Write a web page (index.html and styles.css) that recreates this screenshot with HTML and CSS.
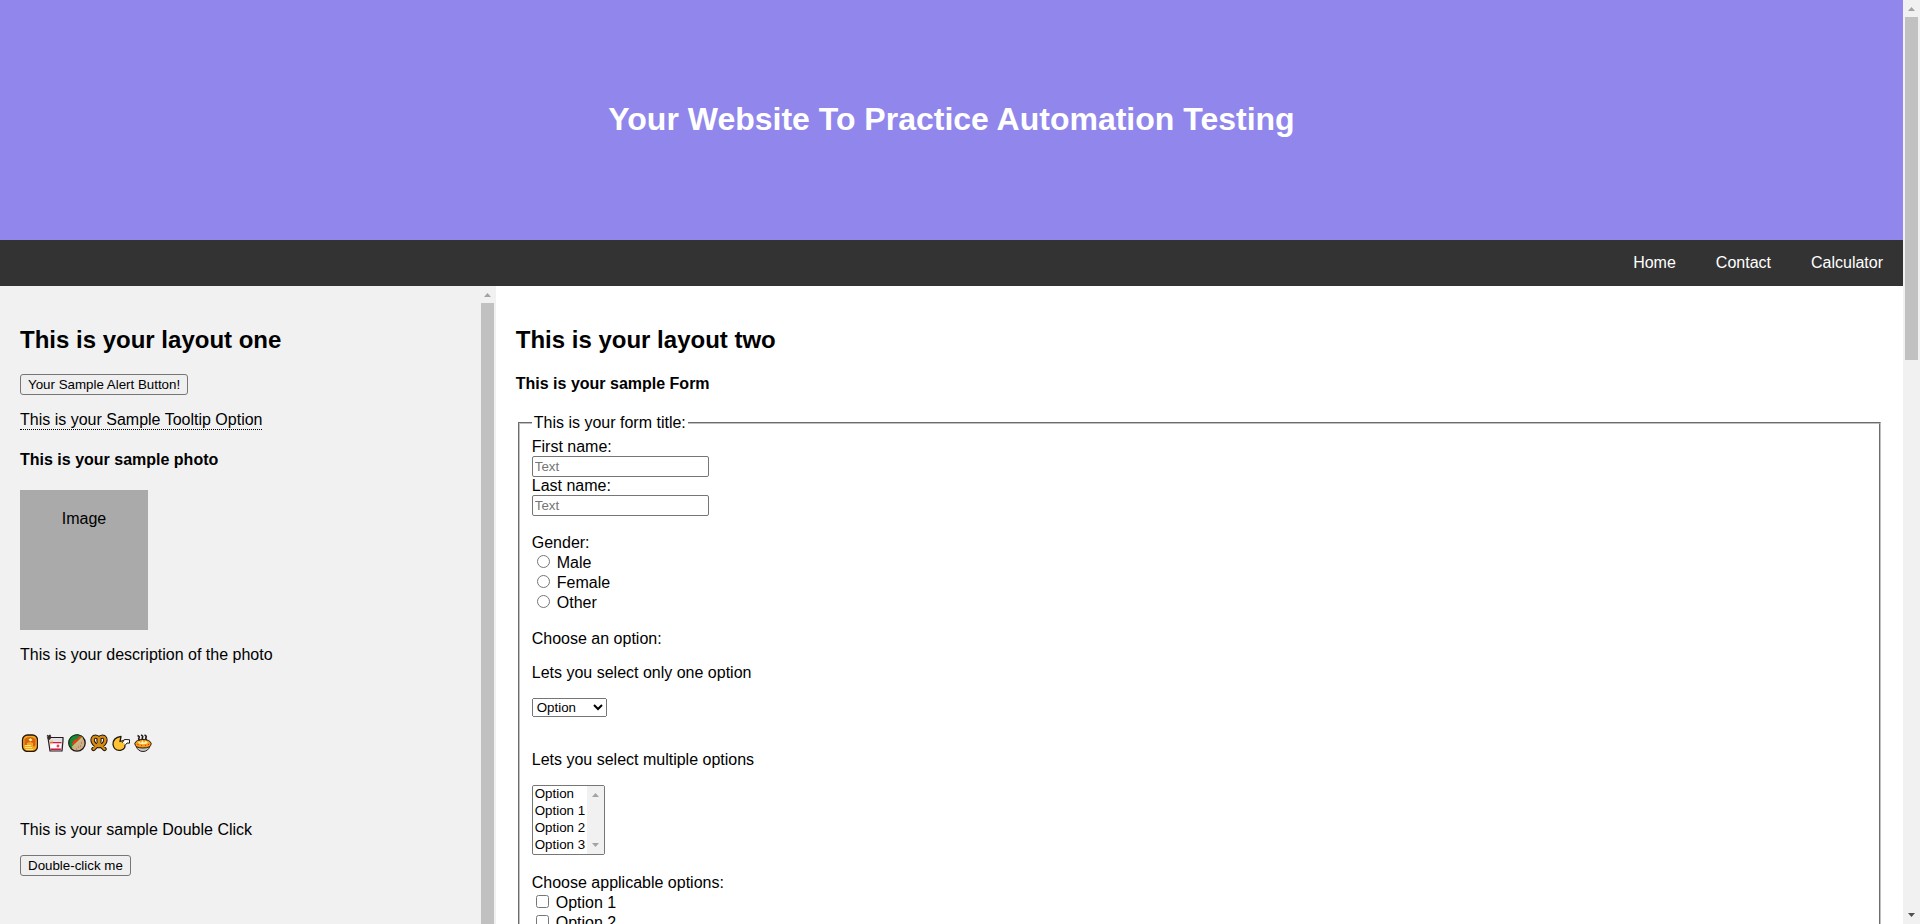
FILE: index.html
```html
<!DOCTYPE html>
<html lang="en">
<head>
<meta charset="utf-8">
<title>Your Website To Practice Automation Testing</title>
<link rel="stylesheet" href="styles.css">
</head>
<body>
<div class="window">
  <div class="page">
    <header class="header"><h1>Your Website To Practice Automation Testing</h1></header>
    <nav class="navbar">
      <a href="#home">Home</a>
      <a href="#contact">Contact</a>
      <a href="#calculator">Calculator</a>
    </nav>
    <div class="row">
      <aside class="side">
        <div class="side-content">
          <h2>This is your layout one</h2>
          <button type="button">Your Sample Alert Button!</button>
          <div class="tooltip">This is your Sample Tooltip Option</div>
          <h4>This is your sample photo</h4>
          <div class="photo">Image</div>
          <p>This is your description of the photo</p>
          <div class="foods">
            <svg class="food food-first" viewBox="0 0 18 18" aria-hidden="true">
              <rect x="2.500" y="1" width="15" height="16.500" rx="5" fill="#f5a81c" stroke="#26160a" stroke-width="1.300"/>
              <path d="M4.500 5q5.500-4 11 0v6q-1 3-2.500 1V9l-3-1-3 1v2q-1.500 1-2.500 0z" fill="#d56311"/>
              <path d="M5 11.500h6M5 13.500h7M6 15.500h7" stroke="#ffe27a" stroke-width="1.200"/>
              <path d="M8.500 5.500 10.500 4.300 12.500 6 10.300 7.500z" fill="#fff2a2"/>
            </svg>
            <svg class="food" viewBox="0 0 18 18" aria-hidden="true">
              <path d="M2 3.500h15v3L16 17H4L2.500 7z" fill="#e4e0e2" stroke="#221a20" stroke-width="1.200"/>
              <path d="M4 8h11.500l-.2 1.500H4.200z" fill="#d7193f"/>
              <path d="M4.300 9.500h11l-.4 5H4.600z" fill="#fff"/>
              <path d="M4.500 14.500h10.600l-.3 1.500H4.700z" fill="#d7193f"/>
              <path d="M12 10.500v3M10.500 12h3" stroke="#d7193f" stroke-width="1.200"/>
              <path d="M1 1.500l4 2M4 .8v4M1.500 3.300l2.700 2" stroke="#3c2b25" stroke-width="1.700"/>
              <path d="M5 6.500v4M6.500 6.500v2" stroke="#f0b95b"/>
            </svg>
            <svg class="food" viewBox="0 0 18 18" aria-hidden="true">
              <circle cx="9" cy="9" r="8.200" fill="#d1ad8c" stroke="#1c1712" stroke-width="1.300"/>
              <path d="M1.200 11Q0 4 6 1.300q4-1.500 8 1L3.500 14.500z" fill="#168a32" stroke="#10401c"/>
              <path d="M4 10l2-4 3-1 3-3.200L14 3 5 12z" fill="#e83b22"/>
              <path d="M4 13.500 14.500 3.500" stroke="#b4d86a" stroke-width="1.300"/>
              <path d="M10 13h1M13 9h1M8 15h1M12 12h1" stroke="#8d6d52"/>
            </svg>
            <svg class="food" viewBox="0 0 18 18" aria-hidden="true">
              <g fill="none" stroke-linecap="round" stroke-linejoin="round">
                <path d="M3.500 15 7 11.500Q10.500 7.500 9 4.500 6.500 1.800 4 3 1.800 4.500 3 8q2 4 6 4t6-4q1.200-3.500-1-5-2.500-1.200-5 1.500-1.500 3 2 7L14.500 15" stroke="#24170a" stroke-width="4.400"/>
                <path d="M3.500 15 7 11.500Q10.500 7.500 9 4.500 6.500 1.800 4 3 1.800 4.500 3 8q2 4 6 4t6-4q1.200-3.500-1-5-2.500-1.200-5 1.500-1.500 3 2 7L14.500 15" stroke="#d68b12" stroke-width="2.400"/>
              </g>
            </svg>
            <svg class="food" viewBox="0 0 18 18" aria-hidden="true">
              <path d="M9 2.500 8 7.500l5-1.500-1 3Q15 15 8.500 16.300 2 17 1 10.500.800 3.500 9 2.500z" fill="#ffc233" stroke="#1f1a12" stroke-width="1.300" stroke-linejoin="round"/>
              <path d="m10 9 2.500-3.500 5 .2v3.500l-2.500-.2-2 2.500z" fill="#fff" stroke="#1f1a12" stroke-linejoin="round"/>
              <path d="M9.500 8.500 8.300 11.500h4l.7-2z" fill="#ffc233"/>
            </svg>
            <svg class="food" viewBox="0 0 18 18" aria-hidden="true">
              <path d="M2 12q2 5.500 7 5.500t7-5.500z" fill="#c6c6c6" stroke="#282420"/>
              <path d="M.8 9.500Q2 5.500 9 5.500t8.200 4q0 4.500-8.200 4.500T.8 9.500z" fill="#f49b13" stroke="#241c12"/>
              <path d="M4 9l1-2 2 2 1.500-3L10 9l1.700-2.500L14 9q-5 2.500-10 0z" fill="#fff2ad"/>
              <path d="M3.500 10.500h1M7 11.500h1M11 11.500h1M14 10.500h1" stroke="#d2352a"/>
              <path d="M3.500 1.500q2.500 1 1.500 2.500t1 2M7 1q2.500 1 1.500 2.500t1 2M10.500 1q2.500 1 1.500 2.500t1 2" fill="none" stroke="#211c1a" stroke-width="1.600"/>
            </svg>
          </div>
          <p>This is your sample Double Click</p>
          <button type="button">Double-click me</button>
        </div>
        <div class="scrollbar" aria-hidden="true">
          <svg class="arrow" viewBox="0 0 17 17"><path d="M5 11h7L8.500 7z"/></svg>
          <div class="thumb thumb-fill"></div>
        </div>
      </aside>
      <main class="main">
        <h2>This is your layout two</h2>
        <h4>This is your sample Form</h4>
        <form>
          <fieldset>
            <legend>This is your form title:</legend>
            <div class="names">
              <label for="fname">First name:</label>
              <input class="text" type="text" id="fname" placeholder="Text">
              <label for="lname">Last name:</label>
              <input class="text" type="text" id="lname" placeholder="Text">
            </div>
            <div class="group">
              <div>Gender:</div>
              <div class="choice"><input type="radio" name="gender" id="male"><label for="male">Male</label></div>
              <div class="choice"><input type="radio" name="gender" id="female"><label for="female">Female</label></div>
              <div class="choice"><input type="radio" name="gender" id="other"><label for="other">Other</label></div>
            </div>
            <div class="group">Choose an option:</div>
            <p><label for="single">Lets you select only one option</label></p>
            <select class="single" id="single">
              <option>Option</option><option>Option 1</option><option>Option 2</option><option>Option 3</option>
            </select>
            <p class="multiple-label"><label for="multiple">Lets you select multiple options</label></p>
            <div class="listbox">
              <select id="multiple" multiple size="4">
                <option>Option</option><option>Option 1</option><option>Option 2</option><option>Option 3</option>
              </select>
              <div class="scrollbar" aria-hidden="true">
                <svg class="arrow" viewBox="0 0 17 17"><path d="M5 11h7L8.500 7z"/></svg>
                <svg class="arrow" viewBox="0 0 17 17"><path d="M5 6h7L8.500 10z"/></svg>
              </div>
            </div>
            <div class="group group-checks">
              <div>Choose applicable options:</div>
              <div class="choice"><input type="checkbox" id="option1"><label for="option1">Option 1</label></div>
              <div class="choice"><input type="checkbox" id="option2"><label for="option2">Option 2</label></div>
            </div>
          </fieldset>
        </form>
      </main>
    </div>
  </div>
  <div class="scrollbar" aria-hidden="true">
    <svg class="arrow" viewBox="0 0 17 17"><path d="M5 11h7L8.500 7z"/></svg>
    <div class="track"><div class="thumb thumb-page"></div></div>
    <svg class="arrow arrow-active" viewBox="0 0 17 17"><path d="M5 6h7L8.500 10z"/></svg>
  </div>
</div>
</body>
</html>
```
FILE: styles.css
```css
body {
  margin: 0;
  font-family: "Liberation Sans", Arial, sans-serif;
  font-size: 16px;
  line-height: 18px;
  color: #000;
  background: #fff;
}

button,
input,
select {
  font-family: inherit;
}

h1 {
  margin: 0;
  font-size: 32px;
  line-height: 37px;
}

h2 {
  margin: 20px 0;
  font-size: 24px;
  line-height: 28px;
}

h4 {
  margin: 21px 0;
}

p {
  margin: 16px 0;
}

.window {
  display: flex;
  height: 100vh;
  overflow: hidden;
}

.page {
  flex: 1;
  display: flex;
  flex-direction: column;
  min-width: 0;
}

.header {
  padding: 101px 80px 102px;
  text-align: center;
  color: #fff;
  background: #9186ec;
}

.navbar {
  display: flex;
  justify-content: flex-end;
  background: #333;
}

.navbar a {
  padding: 14px 20px;
  color: #fff;
  text-decoration: none;
}

.row {
  flex: 1;
  display: flex;
  min-height: 0;
}

.side {
  box-sizing: border-box;
  width: calc(25% + 20px);
  display: flex;
  background: #f1f1f1;
  overflow: hidden;
}

.side-content {
  flex: 1;
  padding: 20px 0 0 20px;
}

.side button {
  display: block;
  height: 21px;
  padding: 1px 7px;
  border: 1px solid #767676;
  border-radius: 3px;
  background: #efefef;
  color: #000;
}

.tooltip {
  width: fit-content;
  margin-top: 16px;
  border-bottom: 1px dotted #000;
}

.photo {
  box-sizing: border-box;
  width: 128px;
  height: 140px;
  padding: 20px;
  text-align: center;
  background: #aaa;
}

.foods {
  display: flex;
  gap: 4px;
  margin: 70px 0 69px;
}

.food {
  width: 18px;
  height: 18px;
}

.food-first {
  margin-right: 4px;
}

.main {
  flex: 1;
  padding: 20px;
  overflow: hidden;
}

.main h2 {
  margin-bottom: 21px;
}

fieldset {
  margin: 0 2px;
  padding: 6px 12px 10px;
  border: 2px groove #c0c0c0;
}

legend {
  padding: 0 2px;
}

.names {
  display: flex;
  flex-direction: column;
  align-items: flex-start;
}

.text {
  box-sizing: border-box;
  width: 177px;
  height: 21px;
  padding: 1px 2px;
  border: 1px solid #767676;
  border-radius: 2px;
}

.group {
  margin-top: 18px;
}

.group-checks {
  margin-top: 19px;
}

.choice {
  display: flex;
  align-items: flex-start;
  gap: 4px;
  height: 20px;
}

.choice input {
  margin: 3px 3px 0 5px;
}

.choice label {
  padding-top: 2px;
}

.choice input[type="checkbox"] {
  margin-left: 4px;
}

.single {
  display: block;
  width: 75px;
  height: 19px;
}

.multiple-label {
  margin-top: 34px;
}

.listbox {
  display: flex;
  box-sizing: border-box;
  width: 73px;
  height: 70px;
  border: 1px solid #767676;
  border-radius: 2px;
  overflow: hidden;
}

.listbox select {
  flex: 1;
  min-width: 0;
  padding: 0;
  border: 0;
  overflow: hidden;
  scrollbar-width: none;
}

.listbox option {
  height: 17px;
  padding: 0 2px;
}

.scrollbar {
  flex: 0 0 17px;
  display: flex;
  flex-direction: column;
  justify-content: space-between;
  background: #f1f1f1;
}

.arrow {
  flex: none;
  width: 17px;
  height: 17px;
  fill: #a3a3a3;
}

.arrow-active {
  fill: #505050;
}

.track {
  flex: 1;
}

.thumb {
  margin: 0 2px;
  background: #c1c1c1;
}

.thumb-fill {
  flex: 1;
}

.thumb-page {
  height: 38.5%;
}
```
